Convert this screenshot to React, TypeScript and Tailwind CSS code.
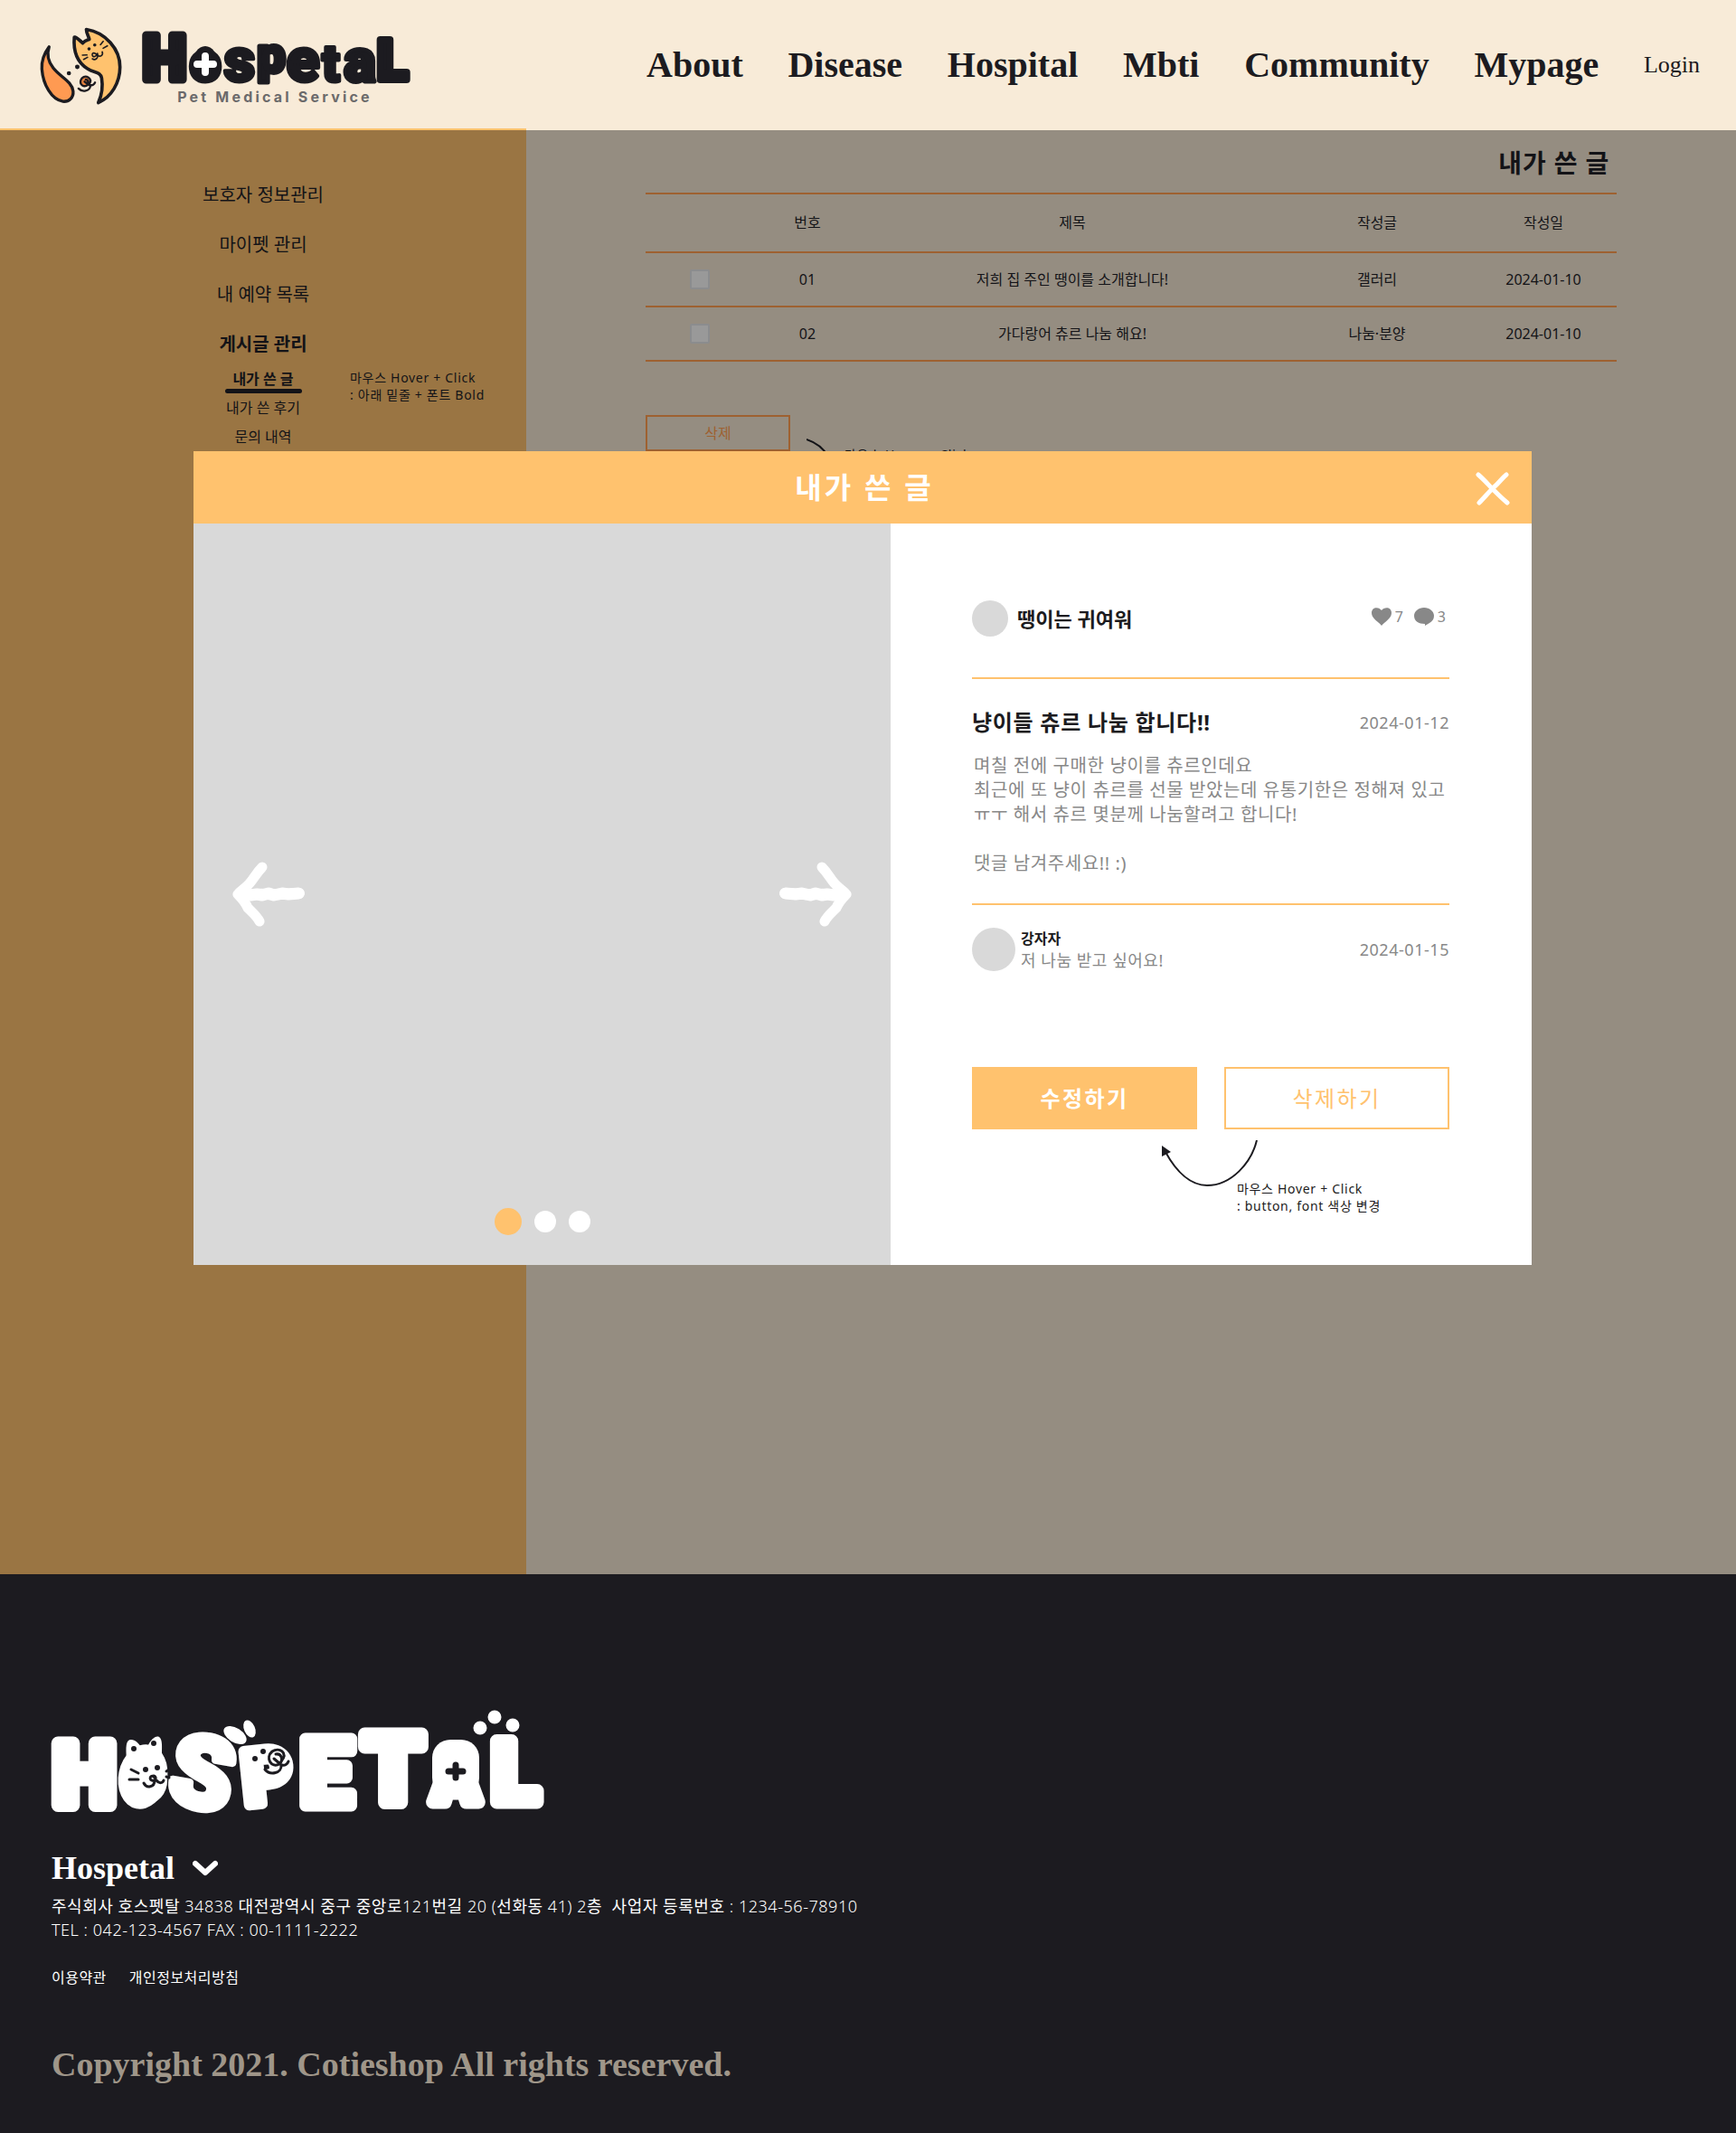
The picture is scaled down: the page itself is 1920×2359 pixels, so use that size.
import React from "react";

const navLinks = ["About", "Disease", "Hospital", "Mbti", "Community", "Mypage"];

const posts = [
  { no: "01", title: "저희 집 주인 땡이를 소개합니다!", board: "갤러리", date: "2024-01-10" },
  { no: "02", title: "가다랑어 츄르 나눔 해요!", board: "나눔·분양", date: "2024-01-10" },
];

function PetMark() {
  return (
    <svg viewBox="70 50 280 270" className="h-[90px] w-[93px] shrink-0" fill="none" stroke="#1c1b20" strokeLinecap="round" strokeLinejoin="round" aria-hidden="true">
      <path d="M228 66C292 76 341 132 340 192C340 244 311 292 268 310C280 284 283 252 279 228C275 206 254 212 232 197C198 176 184 140 188 92L190 92C198 94 206 102 216 112C222 104 230 102 238 99C235 88 228 78 228 66Z" fill="#ffc26e" strokeWidth="11" />
      <path d="M104 124C96 148 100 172 118 195C140 224 180 238 184 272C186 294 170 308 150 306C112 300 84 250 80 198C78 166 92 140 104 124Z" fill="#ff9a52" strokeWidth="10" />
      <g strokeWidth="5">
        <path d="M263 152C258 142 246 143 248 152C250 160 262 158 265 146C270 164 256 170 248 164M266 152C274 160 285 152 281 141" />
        <path d="M215 152L230 151M219 166L232 159M275 117L284 106M284 129L298 121" />
      </g>
      <g fill="#1c1b20" stroke="none">
        <circle cx="237" cy="131" r="5.5" />
        <circle cx="256" cy="118" r="5.5" />
        <circle cx="198" cy="191" r="7.5" />
        <circle cx="170" cy="212" r="7" />
      </g>
      <circle cx="226" cy="240" r="17" fill="#e8833f" stroke="none" />
      <path d="M238 248C250 228 226 216 213 229C202 244 214 260 229 253C238 246 234 234 226 233M222 240L236 251M202 263C214 276 240 274 242 252M242 251C248 254 254 250 257 243" strokeWidth="7" />
    </svg>
  );
}

function HeaderWordmark() {
  return (
    <svg viewBox="0 0 296 64" className="h-16 w-[296px] overflow-visible" role="img" aria-label="Hospetal">
      <g fill="#1c1b20" stroke="#1c1b20" strokeLinejoin="round" fontFamily="Roboto, sans-serif" fontWeight="900" textAnchor="middle">
        <text x="26" y="57" fontSize="68" strokeWidth="9">H</text>
        <text x="71" y="58" fontSize="60" strokeWidth="6">o</text>
        <text x="109" y="59" fontSize="68" strokeWidth="4">s</text>
        <text x="144" y="49" fontSize="56" strokeWidth="5">p</text>
        <text x="179" y="59" fontSize="68" strokeWidth="4">e</text>
        <text x="210" y="59" fontSize="58" strokeWidth="4">t</text>
        <text x="242" y="59" fontSize="66" strokeWidth="5">a</text>
        <text x="278" y="57" fontSize="62" strokeWidth="8">L</text>
      </g>
      <ellipse cx="71" cy="40" rx="14" ry="20" fill="#1c1b20" />
      <path d="M71 31V49M62 40H80" stroke="#fff" strokeWidth="8" strokeLinecap="round" />
    </svg>
  );
}

function FooterWordmark() {
  return (
    <svg viewBox="0 0 546 120" className="h-[120px] w-[546px] max-w-full overflow-visible" role="img" aria-label="Hospetal">
      <g fill="#fff" stroke="#fff" strokeWidth="15" strokeLinejoin="round" fontFamily="Roboto, sans-serif" fontWeight="900" textAnchor="middle">
        <text x="36" y="107" fontSize="97">H</text>
        <text x="102" y="98" fontSize="60">O</text>
        <text x="167" y="109" fontSize="110" strokeWidth="9" transform="rotate(10 167 70)">S</text>
        <text x="238" y="104" fontSize="84" strokeWidth="12" transform="rotate(-6 238 70)">P</text>
        <text x="304" y="107" fontSize="104" strokeWidth="13">E</text>
        <text x="378" y="103" fontSize="106">T</text>
        <text x="447" y="103" fontSize="74">A</text>
        <text x="513" y="103" fontSize="95">L</text>
      </g>
      <g fill="#fff">
        <ellipse cx="101" cy="75" rx="27" ry="36" transform="rotate(12 101 75)" />
        <path d="M83 56C82 42 82 34 88 34C93 34 96 38 99 42C103 42 106 41 107 40C110 34 115 29 119 31C123 34 122 42 122 50Z" />
        <rect x="421" y="34" width="52" height="62" rx="20" />
        <ellipse cx="203" cy="29" rx="14" ry="8" transform="rotate(32 203 29)" />
        <ellipse cx="219" cy="22" rx="6" ry="10" transform="rotate(-24 219 22)" />
        <circle cx="474" cy="21" r="7.5" />
        <circle cx="490" cy="9" r="7.5" />
        <circle cx="510" cy="18" r="7.5" />
      </g>
      <g fill="#1c1b20">
        <circle cx="91" cy="44" r="3" />
        <circle cx="113" cy="38" r="3" />
        <circle cx="104" cy="67" r="3" />
        <circle cx="117" cy="65" r="3" />
        <circle cx="225" cy="55" r="3" />
        <circle cx="234" cy="47" r="3" />
      </g>
      <g fill="none" stroke="#1c1b20" strokeWidth="3" strokeLinecap="round" strokeLinejoin="round">
        <path d="M88 67L96 71M86 78H96M127 69L130 67M127 75L130 76" />
        <path d="M115 77C110 70 107 78 111 79C115 80 117 75 113 74M114 79C114 87 105 88 102 82M116 79C119 83 123 82 124 79" />
        <path d="M254 58C262 48 252 42 244 47C236 54 243 66 252 61C257 56 254 49 248 50M246 55L253 61M236 67C242 74 255 71 254 62M255 62C258 63 261 61 262 58" />
      </g>
      <path d="M447 62V76M439 69H455" stroke="#1c1b20" strokeWidth="7" strokeLinecap="round" />
    </svg>
  );
}

function BrushArrow({ flip = false }: { flip?: boolean }) {
  return (
    <svg viewBox="0 0 82 72" className={flip ? "h-[72px] w-[82px] -scale-x-100" : "h-[72px] w-[82px]"} fill="none" stroke="#fff" strokeLinecap="round" strokeLinejoin="round" aria-hidden="true">
      <path d="M33 6C25 14 23 21 16 27C12 31 8 33 6 36C10 40 14 44 17 51C22 56 27 60 30 66" strokeWidth="11" />
      <path d="M10 36C22 37 28 35 38 36S62 35 74 35" strokeWidth="12" />
      <path d="M20 37L27 36L33 37L40 35L46 37L55 35L62 36L73 35" strokeWidth="13" />
    </svg>
  );
}

function HoverNote({ detail }: { detail?: string }) {
  return (
    <p className="text-[14px] leading-[19px] tracking-[0.05em] whitespace-nowrap">
      마우스 Hover + Click
      {detail && (
        <>
          <br />: {detail}
        </>
      )}
    </p>
  );
}

function SiteHeader() {
  return (
    <header className="flex h-[142px] items-start justify-between bg-[#f8ebd8] pr-10 pl-[43px]">
      <a href="#home" className="flex gap-5 pt-[27px]" aria-label="Hospetal home">
        <PetMark />
        <span className="flex flex-col pt-1">
          <HeaderWordmark />
          <span className="mt-0.5 text-center font-['Inter'] text-[16px] leading-5 font-bold tracking-[0.2em] text-[#6b6a6b]">
            Pet Medical Service
          </span>
        </span>
      </a>
      <nav className="flex w-[1165px] items-center justify-between pt-12 font-['Liberation_Serif',serif] text-[#1c1b20]">
        {navLinks.map((label) => (
          <a key={label} href={`#${label.toLowerCase()}`} className="text-[40px] leading-[48px] font-bold">
            {label}
          </a>
        ))}
        <a href="#login" className="text-[26px] leading-8">
          Login
        </a>
      </nav>
    </header>
  );
}

function Sidebar() {
  return (
    <aside className="w-[582px] shrink-0 border-t-2 border-[#ffc26e] bg-[#9a7543] pt-[57px]">
      <nav>
        <ul className="flex flex-col gap-[25px] text-center text-[20px] leading-[30px]">
          <li><a href="#guardian">보호자 정보관리</a></li>
          <li><a href="#mypet">마이펫 관리</a></li>
          <li><a href="#reservations">내 예약 목록</a></li>
          <li>
            <a href="#posts" className="font-bold">게시글 관리</a>
            <ul className="mt-[7px] text-[16px] leading-8">
              <li className="relative">
                <a href="#my-posts" className="relative inline-block w-[85px] font-bold after:absolute after:inset-x-0 after:bottom-0 after:h-[5px] after:rounded-full after:bg-[#131317]">
                  내가 쓴 글
                </a>
                <div className="absolute top-[5px] left-[387px] text-left">
                  <HoverNote detail="아래 밑줄 + 폰트 Bold" />
                </div>
              </li>
              <li><a href="#my-reviews">내가 쓴 후기</a></li>
              <li><a href="#inquiries">문의 내역</a></li>
            </ul>
          </li>
        </ul>
      </nav>
    </aside>
  );
}

function PostTable() {
  return (
    <table className="mt-[15px] w-full table-fixed border-separate border-spacing-0 text-center text-[16px]">
      <colgroup>
        <col className="w-[120px]" />
        <col className="w-[118px]" />
        <col />
        <col className="w-[206px]" />
        <col className="w-[162px]" />
      </colgroup>
      <thead>
        <tr>
          {["", "번호", "제목", "작성글", "작성일"].map((h, i) => (
            <th key={i} scope="col" aria-label={h || "선택"} className="h-[67px] border-y-2 border-[#9e6131] p-0 pb-0.5 font-normal">
              {h}
            </th>
          ))}
        </tr>
      </thead>
      <tbody>
        {posts.map((post) => (
          <tr key={post.no}>
            <td className="h-[60px] border-b-2 border-[#9e6131] p-0">
              <input
                type="checkbox"
                aria-label={`${post.title} 선택`}
                className="mx-auto block size-[22px] appearance-none rounded-xs border-2 border-[#8b8c8e] bg-[#999999]"
              />
            </td>
            <td className="border-b-2 border-[#9e6131] p-0">{post.no}</td>
            <td className="border-b-2 border-[#9e6131] p-0">{post.title}</td>
            <td className="border-b-2 border-[#9e6131] p-0">{post.board}</td>
            <td className="border-b-2 border-[#9e6131] p-0">{post.date}</td>
          </tr>
        ))}
      </tbody>
    </table>
  );
}

function PostDialog() {
  return (
    <section role="dialog" aria-labelledby="dialog-title" className="absolute top-[357px] right-[226px] left-[214px] bg-white">
      <header className="relative flex h-20 items-center justify-center bg-[#ffc26e]">
        <h2 id="dialog-title" className="pl-1 text-[32px] font-bold tracking-[0.1em] text-white">내가 쓴 글</h2>
        <button type="button" aria-label="닫기" className="absolute top-[22px] right-6">
          <svg viewBox="0 0 38 38" className="size-[38px]" fill="none" stroke="#fff" strokeWidth="5" strokeLinecap="round" strokeLinejoin="round" aria-hidden="true">
            <path d="M3 4C9 9 14 15 19 20C24 25 29 30 35 35M34 4C29 8 26 13 20 18C14 24 9 30 4 35" />
          </svg>
        </button>
      </header>
      <div className="grid min-h-[820px] grid-cols-[771fr_709fr]">
        <div className="relative flex items-center justify-between bg-[#d9d9d9] px-[43px]">
          <button type="button" aria-label="이전 사진"><BrushArrow /></button>
          <button type="button" aria-label="다음 사진"><BrushArrow flip /></button>
          <div className="absolute inset-x-0 bottom-[33px] flex items-center justify-center gap-3.5">
            <button type="button" aria-label="사진 1" className="size-[30px] rounded-full bg-[#ffc26e]" />
            <button type="button" aria-label="사진 2" className="size-6 rounded-full bg-white" />
            <button type="button" aria-label="사진 3" className="size-6 rounded-full bg-white" />
          </div>
        </div>

        <article className="pt-[85px] pr-[91px] pl-[90px] text-[#888888]">
          <header className="flex items-center border-b-2 border-[#ffc26e] pb-[45px]">
            <span className="size-10 rounded-full bg-[#d9d9d9]" />
            <h3 className="ml-2.5 text-[22px] leading-10 font-bold text-[#1c1b20]">땡이는 귀여워</h3>
            <span className="ml-auto flex items-center gap-1 pr-1 pb-1 text-[16px] leading-5">
              <svg viewBox="0 0 22 20" className="h-5 w-[22px]" fill="#888888" role="img" aria-label="좋아요">
                <path d="M11 20C8 16 0 12 0 6C0 -1 8 -1 11 3C14 -1 22 -1 22 6C22 12 14 16 11 20Z" />
              </svg>
              <span>7</span>
              <svg viewBox="0 0 22 20" className="ml-2 h-5 w-[22px]" fill="#888888" role="img" aria-label="댓글">
                <path d="M11 0C17 0 22 4 22 9C22 13 20 15 17 17L12 20L12 18C5 18 0 15 0 9C0 4 5 0 11 0Z" />
              </svg>
              <span>3</span>
            </span>
          </header>

          <div className="mt-[30px] flex items-center justify-between">
            <h4 className="text-[24px] leading-9 font-bold tracking-[0.03em] text-[#1c1b20]">냥이들 츄르 나눔 합니다!!</h4>
            <time className="text-[18px] tracking-[0.03em]">2024-01-12</time>
          </div>
          <p className="mt-4 border-b-2 border-[#ffc26e] pb-[31px] pl-0.5 text-[20px] leading-[27px] tracking-[0.03em] whitespace-nowrap">
            며칠 전에 구매한 냥이를 츄르인데요
            <br />
            최근에 또 냥이 츄르를 선물 받았는데 유통기한은 정해져 있고
            <br />
            ㅠㅜ 해서 츄르 몇분께 나눔할려고 합니다!
            <br />
            <br />
            댓글 남겨주세요!! :)
          </p>

          <div className="mt-[25px] flex items-center">
            <span className="size-12 rounded-full bg-[#d9d9d9]" />
            <div className="ml-1.5 leading-6">
              <p className="text-[16px] font-bold text-[#1c1b20]">강자자</p>
              <p className="text-[18px] tracking-[0.03em]">저 나눔 받고 싶어요!</p>
            </div>
            <time className="ml-auto text-[18px] tracking-[0.03em]">2024-01-15</time>
          </div>

          <div className="mt-[106px] grid grid-cols-2 gap-[30px] text-[24px] tracking-[0.1em]">
            <button type="button" className="h-[69px] bg-[#ffc26e] font-bold text-white">수정하기</button>
            <button type="button" className="h-[69px] border-2 border-[#ffc26e] text-[#ffc26e]">삭제하기</button>
          </div>

          <div className="mt-3 flex items-start justify-end pr-[76px] text-[#1c1b20]">
            <svg viewBox="0 0 108 52" className="-mr-6 h-[52px] w-[108px]" fill="none" aria-hidden="true">
              <path d="M106 0C100 25 78 50 51 50C33 50 17 35 5 13" stroke="#1c1b20" strokeWidth="2" />
              <path d="M1 6L11 13L1 18Z" fill="#1c1b20" />
            </svg>
            <div className="mt-11">
              <HoverNote detail="button, font 색상 변경" />
            </div>
          </div>
        </article>
      </div>
    </section>
  );
}

function Thin({ children }: { children: React.ReactNode }) {
  return <span className="font-light">{children}</span>;
}

function SiteFooter() {
  return (
    <footer className="bg-[#1c1b20] px-[57px] pt-[149px] pb-14 text-white">
      <FooterWordmark />
      <div className="mt-9 flex items-center gap-5">
        <strong className="font-['Liberation_Serif',serif] text-[36px] leading-10 font-bold">Hospetal</strong>
        <button type="button" aria-label="회사 정보 펼치기">
          <svg viewBox="0 0 28 18" className="h-[18px] w-7" fill="none" stroke="#fff" strokeWidth="6" strokeLinecap="round" strokeLinejoin="round" aria-hidden="true">
            <path d="M3 4L14 14L25 4" />
          </svg>
        </button>
      </div>
      <address className="mt-[9px] text-[18px] leading-[26px] tracking-[0.03em] not-italic">
        주식회사 호스펫탈 <Thin>34838</Thin> 대전광역시 중구 중앙로<Thin>121</Thin>번길 <Thin>20 (</Thin>선화동 <Thin>41) 2</Thin>층&nbsp; 사업자 등록번호 <Thin>: 1234-56-78910</Thin>
        <br />
        <Thin>TEL : 042-123-4567 FAX : 00-1111-2222</Thin>
      </address>
      <div className="mt-7 flex gap-[25px] text-[16px] leading-6 tracking-[0.03em]">
        <a href="#terms">이용약관</a>
        <a href="#privacy">개인정보처리방침</a>
      </div>
      <p className="mt-16 font-['Liberation_Serif',serif] text-[38px] leading-10 font-bold text-[#9f9689]">
        Copyright 2021. Cotieshop All rights reserved.
      </p>
    </footer>
  );
}

export default function App() {
  return (
    <div className="font-['Noto_Sans','Noto_Sans_CJK_KR',sans-serif]">
      <SiteHeader />
      <div className="relative flex min-h-[1599px] text-[#131317]">
        <Sidebar />
        <main className="grow border-t-2 border-[#f8ebd8] bg-[#958d81] px-[132px] pt-[18px]">
          <h1 className="pr-2 text-right text-[28px] leading-9 font-bold tracking-[0.03em]">내가 쓴 글</h1>
          <PostTable />
          <div className="mt-[59px] flex items-start">
            <button type="button" className="h-10 w-40 border-2 border-[#9e6131] text-[16px] text-[#9e6131]">삭제</button>
            <svg viewBox="0 0 42 60" className="mt-[26px] ml-[18px] h-[60px] w-[42px]" fill="none" stroke="#131317" strokeWidth="2" aria-hidden="true">
              <path d="M0 1C12 5 19 11 24 20C28 28 30 40 28 54" />
            </svg>
            <div className="mt-[34px]">
              <HoverNote />
            </div>
          </div>
        </main>
        <PostDialog />
      </div>
      <SiteFooter />
    </div>
  );
}
